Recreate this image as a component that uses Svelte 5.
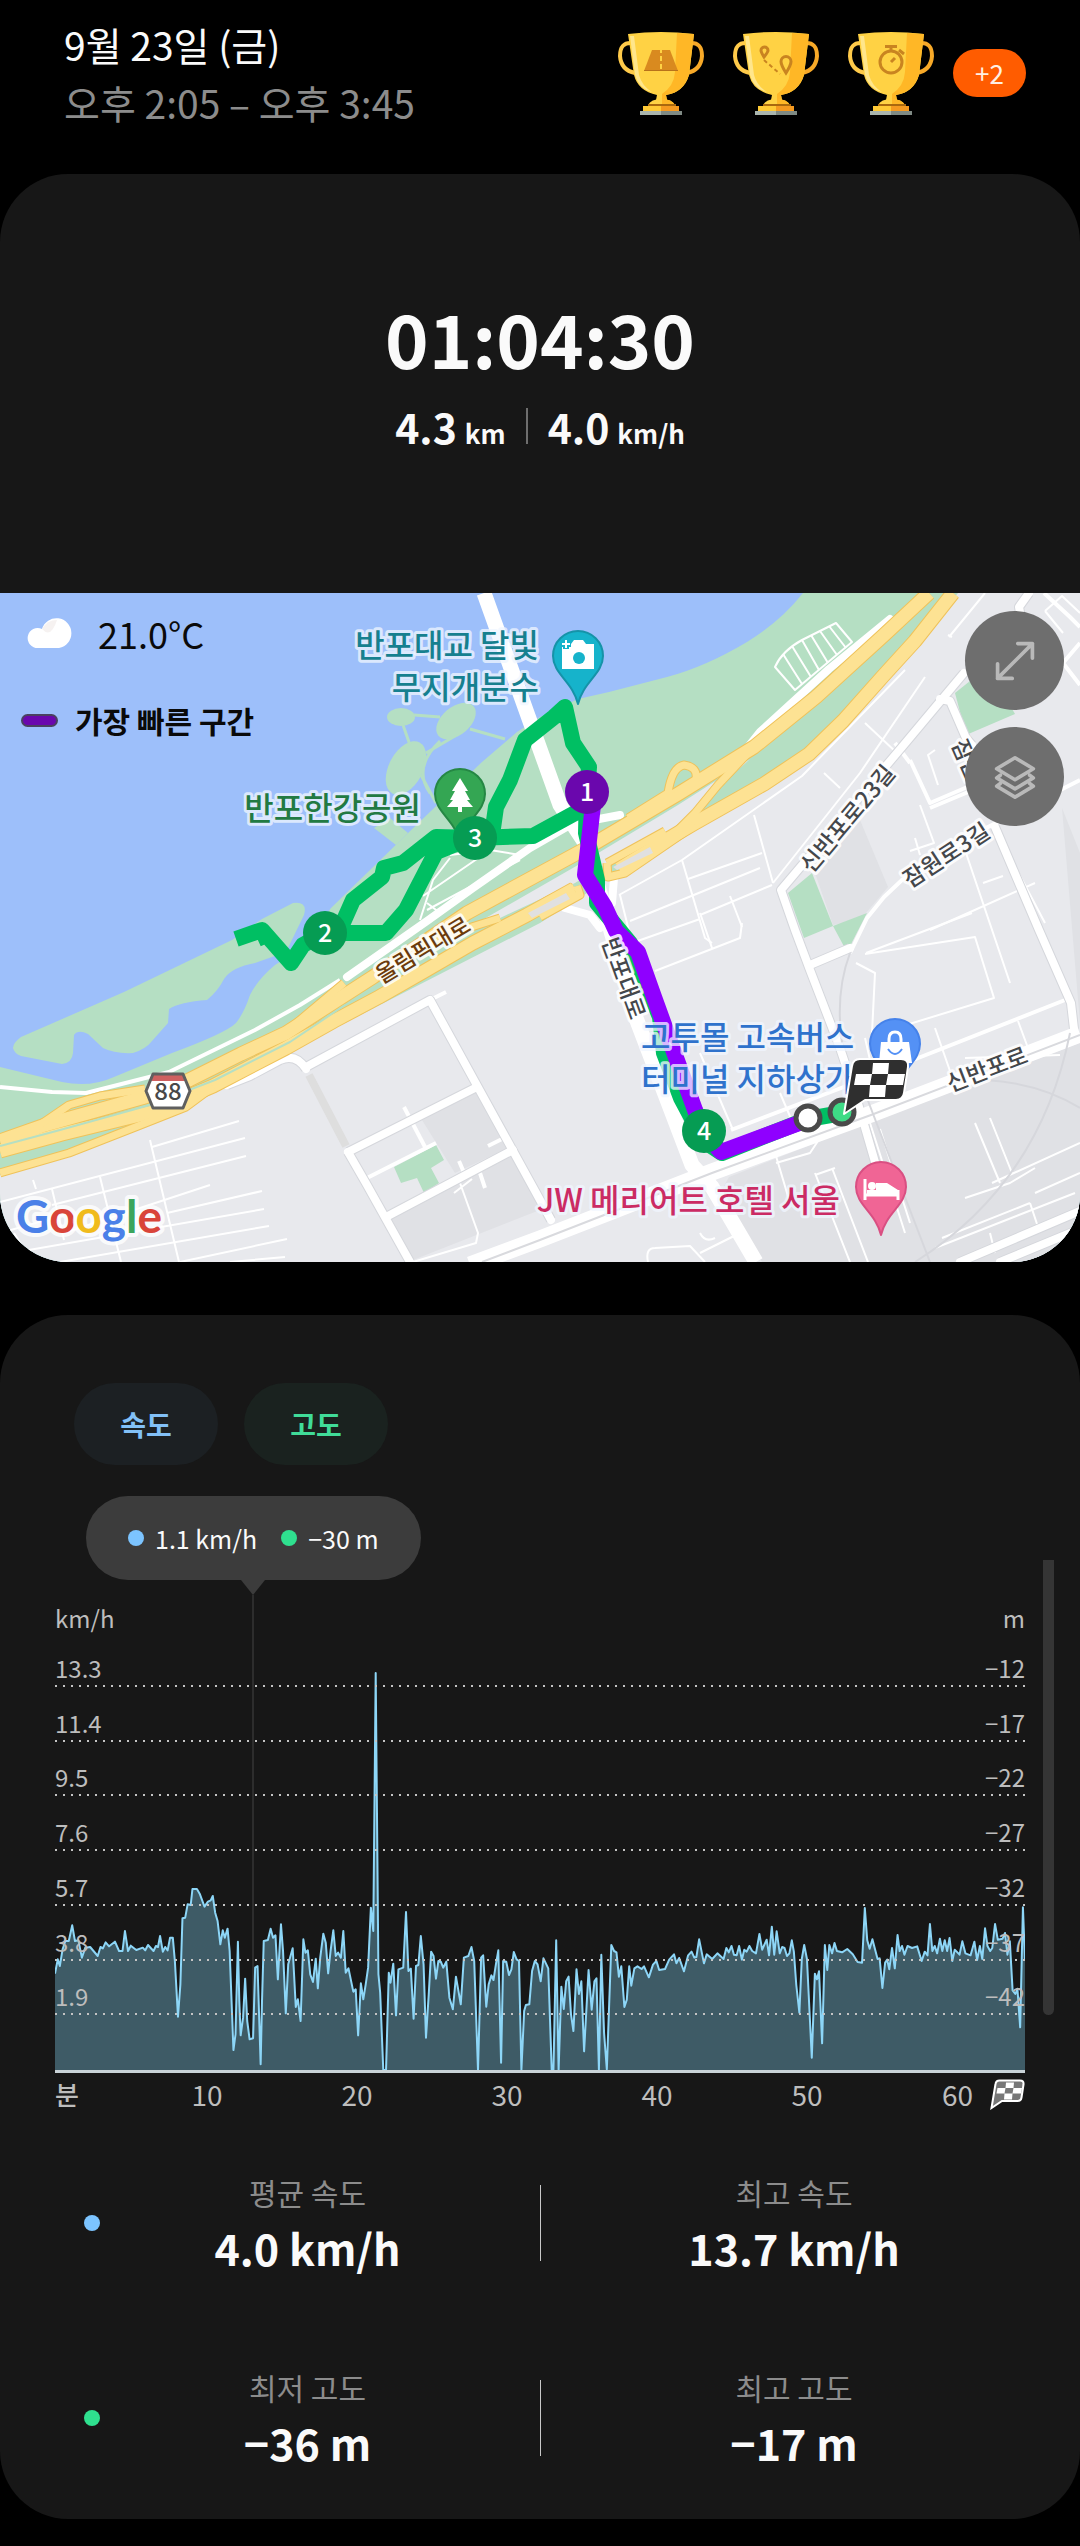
<script lang="ts">
	// Workout detail: session header with awards, duration summary with the route
	// map underneath, and the speed / elevation chart with its averages.
	type Award = 'distance' | 'route' | 'time';

	const awards: Award[] = ['distance', 'route', 'time'];

	const rows = [
		{ speed: '13.3', height: '−12' },
		{ speed: '11.4', height: '−17' },
		{ speed: '9.5', height: '−22' },
		{ speed: '7.6', height: '−27' },
		{ speed: '5.7', height: '−32' },
		{ speed: '3.8', height: '−37' },
		{ speed: '1.9', height: '−42' }
	];

	const stats = [
		{
			kind: 'speed',
			items: [
				{ label: '평균 속도', value: '4.0 km/h' },
				{ label: '최고 속도', value: '13.7 km/h' }
			]
		},
		{
			kind: 'height',
			items: [
				{ label: '최저 고도', value: '−36 m' },
				{ label: '최고 고도', value: '−17 m' }
			]
		}
	];

	const ticks = [10, 20, 30, 40, 50];

	const kilometres = [
		{ n: 2, x: 325, y: 340 },
		{ n: 3, x: 475, y: 245 },
		{ n: 4, x: 704, y: 538 }
	];

	// Speed samples as "x,height" pairs: 43.5 units a minute, 86 units a km/h.
	const CHART_W = 2816;
	const CHART_H = 1200;
	const samples = `
		0,289 8,332 14,312 22,362 30,387 40,387 50,434 58,387 68,389 78,337 88,367 102,369
		124,342 132,369 139,365 147,383 157,371 174,385 186,357 196,357 203,417 212,357
		220,373 236,360 255,367 262,359 270,375 286,357 293,372 299,369 305,402 313,355
		320,369 327,359 334,397 342,397 348,327 357,160 364,257 370,455 378,457 385,497
		394,495 399,543 412,543 420,529 434,490 444,505 452,509 458,522 465,472 472,447
		480,377 487,419 493,397 501,424 507,357 518,60 524,107 531,385 535,207 539,104
		546,157 552,274 558,147 565,92 575,95 581,307 588,312 597,17 601,207 606,387
		618,390 626,424 633,397 640,404 647,272 656,437 662,357 670,170 677,317 690,365
		699,189 705,212 713,147 721,392 727,352 734,359 741,287 749,264 757,334 763,245
		770,337 779,409 786,382 793,290 800,357 808,419 815,342 822,352 830,337 837,417
		844,292 852,305 866,235 873,242 880,104 888,260 895,212 902,257 909,307 917,487
		924,417 931,1191 939,287 944,232 953,0 961,0 969,292 974,262 982,319 990,164
		997,302 1011,307 1019,474 1026,297 1033,304 1041,154 1048,312 1055,315 1062,402
		1070,317 1077,97 1085,227 1092,355 1099,342 1106,274 1113,327 1120,325 1127,307
		1136,325 1145,217 1155,182 1164,280 1178,197 1187,337 1200,342 1209,369 1217,327
		1228,0 1237,337 1243,344 1252,190 1259,257 1267,284 1273,270 1280,317 1287,359
		1295,22 1301,327 1310,325 1318,285 1325,302 1332,354 1340,332 1347,327 1354,0
		1362,177 1367,195 1377,197 1385,297 1393,327 1401,317 1410,266 1418,335 1432,305
		1442,0 1447,0 1455,389 1462,0 1470,250 1477,183 1484,266 1491,280 1498,167
		1505,117 1514,302 1521,228 1528,266 1536,56 1549,300 1558,181 1566,266 1572,275
		1579,0 1586,346 1594,111 1602,2 1615,375 1623,357 1630,353 1637,280 1644,311
		1653,189 1660,211 1667,311 1673,253 1682,305 1691,311 1703,303 1710,311 1724,278
		1736,316 1746,327 1754,300 1771,303 1783,331 1797,347 1804,320 1812,336 1826,296
		1838,344 1848,355 1856,337 1862,339 1870,392 1884,320 1892,347 1908,333 1923,350
		1941,333 1949,366 1956,353 1964,372 1971,346 1979,344 1986,372 1994,331 2001,361
		2008,355 2016,372 2024,357 2035,350 2045,408 2053,361 2066,391 2073,344 2081,430
		2088,346 2095,416 2104,350 2111,369 2118,366 2125,342 2132,350 2139,389 2145,355
		2152,255 2161,172 2168,333 2175,375 2183,333 2197,37 2206,289 2212,272 2218,296
		2227,80 2235,375 2242,300 2248,375 2256,350 2263,381 2270,357 2285,353 2300,363
		2316,347 2330,324 2343,322 2351,486 2358,389 2365,364 2373,392 2388,333 2394,335
		2402,246 2410,322 2416,331 2422,302 2430,366 2438,305 2446,405 2452,357 2459,372
		2466,346 2475,372 2488,366 2503,371 2516,327 2525,355 2533,344 2540,438 2547,357
		2554,372 2561,350 2569,394 2576,357 2583,389 2590,357 2597,396 2605,327 2612,361
		2626,346 2634,386 2643,350 2658,344 2669,385 2677,330 2685,372 2692,333 2700,425
		2707,372 2715,357 2721,366 2729,438 2737,391 2751,394 2758,411 2765,346 2772,386
		2780,239 2788,228 2794,244 2802,128 2810,488 2816,327`
		.trim()
		.split(/\s+/)
		.map((pair) => pair.split(',').map(Number));

	const line = samples.map(([x, h]) => `${x},${CHART_H - h}`).join(' ');
	const area = `0,${CHART_H} ${line} ${CHART_W},${CHART_H}`;

	// Highway centre lines, drawn twice: casing first, then the fill.
	const highways = [
		'M929 0 L884 42 L816 104 L754 154 L678 201 L585 256 L467 320 L373 384 L286 440 L241 461 L189 487 L145 504 L45 532 L0 548',
		'M953 0 L915 48 L884 82 L843 128 L809 161 L764 191 L695 230 L661 250 L619 276',
		'M574 296 L527 322 L473 350 L423 379 L379 404 L334 428 L286 455 L213 493 L152 519 L62 541 L0 558'
	];
	const ramps = [
		'M344 390 L300 427 L286 439',
		'M145 496 L100 503 L69 512 L31 538',
		'M213 494 L186 514 L138 533 L69 560 L0 580',
		'M628 225 L668 200 Q672 174 684 172 Q698 174 696 186 L690 194 L640 222',
		'M750 158 L718 192 L695 220 L675 240',
		'M540 324 L580 302 L577 293',
		'M545 309 L574 294',
		'M628 230 L678 201',
		'M607 270 L608 284 L625 280 L695 232',
		'M607 270 L665 238',
		'M413 356 L443 343 L500 325'
	];

	const mainRoads = [
		'M964 80 L902 154 L781 297 L795 337 L810 377 L840 455 L855 500 L884 600',
		'M1029 0 L1019 14 L1022 30',
		'M940 106 L950 108 L966 145 L972 152',
		'M995 234 L1039 337 L1071 410 L1074 436',
		'M306 474 L430 407 L551 627',
		'M348 559 L477 494',
		'M386 624 L513 557',
		'M348 559 L367 592 L410 669',
		'M227 492 L250 483 L280 467 Q296 460 306 476',
		'M810 372 L850 355',
		'M1056 669 L1080 660 M960 669 L1080 618 M1000 669 L1080 636'
	];

	const lanes = [
		'M430 407 L446 399',
		'M367 585 L436 550',
		'M404 514 L425 554',
		'M488 553 L504 545',
		'M459 568 L465 582 M480 580 L485 595',
		'M850 360 L867 325 L884 304 L902 287 L988 234 L1080 187',
		'M1080 50 L1063 70 L1080 92 M1044 0 L1070 24 L1080 34',
		'M910 167 L930 210 L1000 180 M930 215 L985 192',
		'M731 537 L870 484 L1065 407',
		'M910 170 L895 150'
	];

	const alleys = [
		'M152 554 L239 528 M0 609 L245 545 M52 612 L246 563 M64 640 L210 592 M0 640 L64 622',
		'M167 620 L262 598 M0 662 L264 616 M60 669 L269 633 M180 669 L287 646 M230 669 L285 664',
		'M150 547 L179 669 M100 584 L121 669 M52 596 L64 647 M33 587 L36 596 M14 640 L32 669',
		'M619 302 L682 267 L802 183 L905 77 M754 222 L773 290 M688 286 L762 260 M630 328 L760 275',
		'M682 267 L705 345 L712 350 M620 302 L632 350 L700 326 M730 303 L742 334 M700 322 L772 292',
		'M773 290 L860 180 L925 84 M865 130 L897 160 M824 180 L840 195',
		'M949 44 L985 0 M948 42 L952 44 M1045 18 L1062 3 L1080 20 M1045 18 L1063 40',
		'M935 157 L928 162 L938 192 M920 212 L934 250 L910 258 M915 245 L920 262',
		'M865 361 L975 344 L994 405 L880 440 M856 370 L875 380 L872 440 M866 360 L972 320',
		'M966 260 L1010 390 M930 337 L1035 290 M983 290 L1003 283 M1000 245 L1045 330',
		'M655 378 L740 345 L742 330 M700 320 L712 355 M700 460 L733 537 M780 500 L795 535',
		'M865 445 L873 480 M935 435 L950 478 M1018 428 L1028 455 M965 465 L1060 462',
		'M975 530 L1000 590 M990 525 L1012 580 M965 605 L1010 590 L1035 575 M992 590 L1080 550',
		'M880 536 L910 630 M870 530 L905 640 M815 580 L850 669 M832 575 L868 669 M815 582 L835 575',
		'M648 669 Q645 655 655 655 L690 653 L705 669 M700 660 L740 640 M700 640 Q705 650 715 645',
		'M776 563 L790 610 M820 545 L810 560 L776 570 M935 655 L1075 600 M942 645 L1030 610',
		'M990 640 L995 660 M1030 610 L1040 640 M1035 600 L1080 580',
		'M460 590 L478 640 L476 650 L413 669 M454 600 L472 586'
	];
</script>

{#snippet flag()}
	<path
		class="flag-body"
		d="M17 3H58Q66 3 65 11L61 37Q60 44 53 44H22L1 58L5 34L9 10Q10 3 17 3Z"
	/>
	<path class="flag-check" d="M30 7H46L45 18H29ZM13 18H29L27 29H11ZM45 18H62L60 29H43ZM27 29H43L42 41H26Z" />
{/snippet}

{#snippet pin(x: number, y: number, kind: string)}
	<g class="pin {kind}" transform="translate({x} {y})">
		<path d="M0 -25A25 25 0 0 1 25 0C25 18 5 26 0 48C-5 26 -25 18 -25 0A25 25 0 0 1 0 -25Z" />
	</g>
{/snippet}

<main>
	<header>
		<div class="when">
			<h1>9월 23일 (금)</h1>
			<p>오후 2:05 – 오후 3:45</p>
		</div>
		<div class="awards">
			{#each awards as award (award)}
				<svg class="trophy" viewBox="0 0 86 83" role="img" aria-label={award}>
					<path class="handle" d="M14 11Q2 10 2 24Q3 38 17 41" />
					<path class="handle dark" d="M72 11Q84 10 84 24Q83 38 69 41" />
					<path fill="#ffd244" d="M10 2Q43 -2 76 2L71 43Q66 60 48 63L49 68H38L39 63Q20 59 16 43Z" />
					<path fill="#ffb726" d="M59 1L76 2L71 43Q66 60 48 63L49 68H44L44 62Q56 54 57 40Z" />
					<path fill="#ffe68c" d="M12 4L16 4L21 43Q24 54 34 60Q21 57 17 43Z" />
					<path fill="#ffd244" d="M30 73Q33 67 43 67Q54 67 57 73Z" />
					<path fill="#ffb726" d="M44 67Q54 67 57 73H44Z" />
					<path fill="#a9690f" d="M30 72H58V74H30Z" />
					<path fill="#ffca35" d="M25 74H43V79H25Z" />
					<path fill="#f59a20" d="M43 74H61V79H43Z" />
					<path fill="#aab5ae" d="M22 79H43V83H22Z" />
					<path fill="#7f8a84" d="M43 79H64V83H43Z" />
					{#if award === 'distance'}
						<path fill="#d98a1f" d="M34 18H52L60 39H26Z" />
						<path fill="#ffd244" d="M42 18H44V21H42ZM42 24H44V29H42ZM42 32H44V37H42Z" />
						<path fill="#b8721a" d="M26 38H60V39H26Z" />
					{:else if award === 'route'}
						<path
							class="engrave"
							d="M31 25Q28 20 28 18.500A3.500 3.500 0 0 1 35 18.500Q35 20 31 25ZM53 41Q48 33 48 29.500A5 5 0 0 1 58 29.500Q58 33 53 41Z"
						/>
						<path class="engrave dash" d="M31 28L47 42" />
					{:else}
						<circle class="engrave" cx="43" cy="30" r="11" />
						<path class="engrave" d="M37 14.500H49M43 15V18M43 30L47 26M51 18L56 22" />
					{/if}
				</svg>
			{/each}
			<button type="button" class="more">+2</button>
		</div>
	</header>

	<section class="card summary">
		<div class="totals">
			<p class="duration">01:04:30</p>
			<div class="pair">
				<p>4.3 <small>km</small></p>
				<span class="rule"></span>
				<p>4.0 <small>km/h</small></p>
			</div>
		</div>

		<div class="map">
			<svg class="canvas" viewBox="0 0 1080 669" role="img" aria-label="운동 경로 지도">
				<rect width="1080" height="669" fill="#9dbffa" />

				<!-- river bank, floating islets and the long island -->
				<g fill="#b5dfc3">
					<path
						d="M803 0Q781 28 747 49Q705 74 667 84L609 99L578 106L540 124L517 139L482 169L406 242L331 315L303 354L275 372Q258 386 250 402Q244 420 236 430Q226 440 172 460L114 484Q90 495 62 489L0 474V669H1080V0Z"
					/>
					<path
						d="M232 347L124 399L21 444Q13 450 13 455Q14 460 21 463L62 471Q72 470 73 460L74 442Q78 436 88 441L103 455Q115 461 133 460Q146 456 152 448L168 430L169 416Q180 409 207 407Q218 398 224 386Q232 374 255 370L286 359L304 322Q308 308 293 310L262 326Z"
					/>
					<ellipse cx="401" cy="124" rx="14" ry="9" />
					<ellipse cx="456" cy="128" rx="23" ry="14" transform="rotate(-40 456 128)" />
					<ellipse cx="406" cy="175" rx="29" ry="17" transform="rotate(-62 406 175)" />
					<path d="M374 235L390 225L408 240L396 252Z" />
				</g>
				<path
					class="causeway"
					d="M414 122L440 124M403 132L410 152M470 136L505 146M426 160L455 143M421 182L436 210M440 148Q412 175 430 200"
				/>

				<!-- city blocks -->
				<path
					fill="#e8e9ed"
					d="M0 582L83 557L186 514L224 494L331 437L540 330L609 286L698 236L764 198L809 169L843 134L884 90L919 48L958 0H1080V669H0Z"
				/>
				<path fill="#e8e9ed" d="M470 334L585 268L678 212L750 166L668 240L610 268L575 290L500 325Z" />
				<g fill="#e0e1e5">
					<path d="M422 527L477 499L510 554L455 580Z" />
					<path d="M389 627L517 560L545 615L413 667Z" />
					<path d="M860 227L888 294L860 327L833 332L815 280Z" />
					<path d="M1062 215L1080 260V430Z" />
					<path d="M729 584L867 530L1080 450V669H762L720 600Z" />
				</g>
				<g fill="#b5dfc3">
					<path d="M970 88L955 100L966 142L1015 121L1000 95Z" />
					<path d="M812 280L788 300L804 345L833 333Z" />
					<path d="M833 333L867 320L847 359Z" />
					<path d="M394 574L436 552L444 567L431 575L439 590L424 600L417 585L401 590Z" />
				</g>

				<!-- streets -->
				{#each alleys as d (d)}<path class="road alley" {d} />{/each}
				{#each lanes as d (d)}<path class="road lane" {d} />{/each}
				{#each mainRoads as d (d)}<path class="road casing" {d} />{/each}
				{#each mainRoads as d (d)}<path class="road main" {d} />{/each}
				<path class="road closed" d="M309 482L346 553" />
				<path class="road avenue" d="M484 0L560 212L585 250L600 300L636 425L692 572L712 594L756 669" />
				<path class="road avenue wide" d="M470 672L540 646L712 579L871 521L1080 441" />
				<path class="median" d="M482 669L540 647L712 580L871 522L1080 442" />
				<path class="road main" d="M577 228L530 255L473 295L427 328L347 384M578 230L620 222M890 26L829 76L760 139L748 154" />
				<path class="road lane" d="M340 387L300 412L255 437L169 479L86 500L52 499L0 494" />
				<path class="road alley" d="M450 265L433 287L420 327M450 262L490 257L520 262M490 257L423 303M520 267L427 317M427 310L440 320" />
				<path class="road main" d="M565 315L590 322L600 335M614 285L612 310" />
				<path class="road alley" d="M836 30L852 49L795 97L775 74Q782 58 802 47Z" />
				<path class="road alley" d="M829 33L846 55M820 38L837 62M811 42L828 70M802 47L819 77M792 53L811 84M783 61L802 91" />

				<!-- ring rail lines -->
				<path class="rail" d="M850 360Q835 400 842 450M865 500L930 669M915 669Q1040 590 1070 440M1080 515Q1040 490 985 487" />

				<!-- expressway -->
				{#each highways as d (d)}<path class="expressway casing" {d} />{/each}
				{#each ramps as d (d)}<path class="ramp casing" {d} />{/each}
				{#each highways as d (d)}<path class="expressway" {d} />{/each}
				{#each ramps as d (d)}<path class="ramp" {d} />{/each}
				<path fill="#e0e0e0" d="M613 274L650 254L653 260L617 277ZM528 320L566 300L570 306L532 325Z" />
				<path class="expressway-line" d="M0 553L60 537L150 512L215 487L290 449L345 412" />

				<g class="street">
					<text class="brown" transform="translate(427 364) rotate(-31)">올림픽대로</text>
					<text transform="translate(854 231) rotate(-50)">신반포로23길</text>
					<text transform="translate(951 269) rotate(-33)">잠원로3길</text>
					<text transform="translate(964 180) rotate(66)">잠원로</text>
					<text transform="translate(990 484) rotate(-21)">신반포로</text>
				</g>

				{@render pin(578, 63, 'teal')}
				<path fill="#fff" d="M562 51H571L574 47H583L586 51H594V76H562Z" />
				<circle cx="579" cy="65" r="6" fill="#16b3cb" />
				<path stroke="#16b3cb" stroke-width="6" d="M561 51H571M566 46V56" />
				<path stroke="#fff" stroke-width="2" d="M562 51H570M566 47V55" />

				{@render pin(460, 201, 'green')}
				<path fill="#fff" d="M460 185L468 198H465L470 207H467L473 214H462V219H458V214H447L453 207H450L455 198H452Z" />

				{@render pin(895, 451, 'blue')}
				<path fill="#fff" d="M881 449H909L912 470H879Z" />
				<path fill="none" stroke="#fff" stroke-width="3" d="M889 450V446Q889 439 895 439Q901 439 901 446V450" />
				<path fill="none" stroke="#5491f5" stroke-width="2" d="M888 456Q895 466 902 456" />

				{@render pin(881, 594, 'pink')}
				<path stroke="#fff" stroke-width="3" d="M865 586V607M865 602H898M898 597V607" />
				<path fill="#fff" d="M876 590H887L898 597V601H867V597H876Z" />
				<circle cx="872" cy="593" r="4" fill="#fff" />

				<!-- recorded route: full track, then the fastest section on top -->
				<path
					class="track"
					d="M842 520L808 526L722 560L704 548L681 505L664 460L660 424L630 350L597 310L597 287L586 240L587 199L589 174L573 150L565 114L554 124L525 147L510 187L496 214L492 242L475 245M587 212L577 219L533 243L475 245L436 244L403 270L384 275L382 284L353 307L341 334L325 340L303 352L291 370L262 337L236 346M262 337L268 350M325 340L386 340L406 317L436 259L458 250"
				/>
				<path class="fast" d="M593 212L585 282L605 314L616 338L638 359L654 404L695 517L704 540L721 559L802 529" />

				<g class="street">
					<text transform="translate(616 388) rotate(70)">반포대로</text>
				</g>
				<g class="place">
					<text class="teal" x="539" y="64" text-anchor="end">반포대교 달빛</text>
					<text class="teal" x="539" y="106" text-anchor="end">무지개분수</text>
					<text class="green" x="421" y="227" text-anchor="end">반포한강공원</text>
					<text class="blue" x="641" y="456">고투몰 고속버스</text>
					<text class="blue" x="641" y="498">터미널 지하상가</text>
					<text class="pink" x="840" y="619" text-anchor="end">JW 메리어트 호텔 서울</text>
				</g>

				{#each kilometres as km (km.n)}
					<g class="km" transform="translate({km.x} {km.y})">
						<circle r="22" />
						<text y="9">{km.n}</text>
					</g>
				{/each}
				<g class="km first" transform="translate(587 199)">
					<circle r="22" />
					<text y="9">1</text>
				</g>

				<circle class="stop" cx="808" cy="525" r="12" />
				<circle class="stop start" cx="842" cy="519" r="12" />
				<g transform="translate(843 463)">{@render flag()}</g>

				<g class="shield">
					<path fill="#fff" d="M153 481H183L190 498L183 515H153L146 498Z" />
					<path fill="#cf6060" d="M153 481H183L185 488H151Z" />
					<path fill="none" stroke="#5f5f5f" stroke-width="3" d="M153 481H183L190 498L183 515H153L146 498Z" />
					<text x="168" y="507">88</text>
				</g>

				<text class="brand" x="16" y="640"
					><tspan fill="#4a80e8">G</tspan><tspan fill="#d9453a">o</tspan><tspan fill="#f0bb1c">o</tspan
					><tspan fill="#4a80e8">g</tspan><tspan fill="#3ba55c">l</tspan><tspan fill="#d9453a">e</tspan></text
				>
			</svg>

			<div class="overlay">
				<div class="weather">
					<svg viewBox="0 0 46 32" aria-hidden="true">
						<path fill="#fff" d="M11 31A10 10 0 1 1 15 12A15 15 0 1 1 32 31Z" />
						<path fill="#f6f2f1" d="M15 12Q20 3 30 3Q24 22 15 12Z" />
					</svg>
					<span>21.0°C</span>
				</div>
				<div class="legend"><i></i>가장 빠른 구간</div>
			</div>
			<div class="tools">
				<button type="button" aria-label="지도 확대">
					<svg viewBox="0 0 48 48"><path d="M27 5H43V21M43 5L5 43M5 27V43H21" /></svg>
				</button>
				<button type="button" aria-label="지도 레이어">
					<svg viewBox="0 0 48 48">
						<path d="M24 3L44 15L24 27L4 15ZM8 22L4 25L24 37L44 25L40 22M8 31L4 34L24 46L44 34L40 31" />
					</svg>
				</button>
			</div>
		</div>
	</section>

	<section class="card details">
		<div class="chips">
			<button type="button" class="chip speed">속도</button>
			<button type="button" class="chip height">고도</button>
		</div>

		<div class="tooltip">
			<span class="dot speed"></span><span>1.1 km/h</span>
			<span class="dot height second"></span><span>−30 m</span>
		</div>

		<div class="chart">
			<div class="units"><span>km/h</span><span>m</span></div>
			<div class="plot">
				<svg viewBox="0 0 {CHART_W} {CHART_H}" preserveAspectRatio="none" aria-hidden="true">
					<polygon points={area} />
					<polyline points={line} />
				</svg>
				{#each rows as row (row.speed)}
					<div class="row"><span>{row.speed}</span><span>{row.height}</span></div>
				{/each}
				<div class="row last"></div>
			</div>
			<div class="axis">
				<span class="unit">분</span>
				{#each ticks as tick (tick)}
					<span>{tick}</span>
				{/each}
				<span class="end">
					60
					<svg viewBox="-2 0 70 62" aria-hidden="true">{@render flag()}</svg>
				</span>
			</div>
		</div>

		<div class="stats">
			{#each stats as group (group.kind)}
				<div class="group">
					<div class="cell left">
						<span class="dot {group.kind}"></span>
						<dl>
							<dt>{group.items[0].label}</dt>
							<dd>{group.items[0].value}</dd>
						</dl>
					</div>
					<div class="cell right">
						<span class="divider"></span>
						<dl>
							<dt>{group.items[1].label}</dt>
							<dd>{group.items[1].value}</dd>
						</dl>
					</div>
				</div>
			{/each}
		</div>

		<div class="scrollbar"></div>
	</section>
</main>

<style>
	:global(body) {
		margin: 0;
		background: #000;
	}
	main {
		padding-bottom: 25px;
		color: #fafafa;
		font-family: 'Noto Sans CJK KR', sans-serif;
	}
	h1,
	p,
	dl,
	dd {
		margin: 0;
	}
	button {
		padding: 0;
		border: 0;
		font: inherit;
		cursor: pointer;
	}

	header {
		display: flex;
		justify-content: space-between;
		align-items: center;
		padding: 15px 54px 43px 64px;
	}
	.when {
		font-size: 39px;
		line-height: 58px;
	}
	.when h1 {
		font-size: inherit;
		font-weight: 400;
	}
	.when p {
		color: #8c8c8c;
	}
	.awards {
		display: flex;
		align-items: center;
		gap: 29px;
	}
	.trophy {
		width: 86px;
		height: 83px;
	}
	.handle {
		fill: none;
		stroke: #ffca4a;
		stroke-width: 4;
	}
	.handle.dark {
		stroke: #f7a928;
	}
	.engrave {
		fill: none;
		stroke: #c98420;
		stroke-width: 3;
	}
	.engrave.dash {
		stroke-width: 2;
		stroke-dasharray: 4 3;
	}
	.more {
		width: 73px;
		height: 48px;
		margin-left: -10px;
		border-radius: 24px;
		background: #ff5c00;
		color: #fff0e4;
		font-size: 26px;
		line-height: 48px;
	}

	.card {
		border-radius: 68px;
		background: #171717;
	}
	.summary {
		overflow: hidden;
		margin-bottom: 53px;
	}
	.totals {
		display: flex;
		flex-direction: column;
		align-items: center;
		gap: 15px;
		padding: 115px 0 141px;
	}
	.duration {
		font-size: 74px;
		font-weight: 700;
		line-height: 96px;
	}
	.pair {
		display: flex;
		align-items: center;
		gap: 20px;
		height: 52px;
		font-size: 41px;
		font-weight: 700;
		line-height: 52px;
	}
	.pair p {
		display: flex;
		align-items: baseline;
		gap: 8px;
	}
	.pair small {
		font-size: 26px;
		line-height: 28px;
	}
	.rule {
		width: 2px;
		height: 36px;
		background: #6e6e6e;
	}

	.map {
		position: relative;
	}
	.canvas {
		display: block;
		width: 100%;
		height: auto;
	}
	.canvas path {
		stroke-linejoin: round;
	}
	.causeway {
		fill: none;
		stroke: #b5dfc3;
		stroke-width: 3;
	}
	.road {
		fill: none;
		stroke: #fff;
	}
	.road.alley {
		stroke-width: 2;
	}
	.road.lane {
		stroke-width: 4;
	}
	.road.casing {
		stroke: #d5d7dc;
		stroke-width: 10;
	}
	.road.main {
		stroke-width: 8;
		stroke-linecap: round;
	}
	.road.avenue {
		stroke-width: 15;
	}
	.road.wide {
		stroke-width: 17;
	}
	.road.closed {
		stroke: #dedede;
		stroke-width: 8;
	}
	.median {
		fill: none;
		stroke: #d9dade;
		stroke-width: 2;
	}
	.rail {
		fill: none;
		stroke: #d6d7dc;
		stroke-width: 2;
	}
	.expressway {
		fill: none;
		stroke: #fde293;
		stroke-width: 13;
	}
	.expressway.casing {
		stroke: #efc25a;
		stroke-width: 15;
	}
	.ramp {
		fill: none;
		stroke: #fde293;
		stroke-width: 7;
	}
	.ramp.casing {
		stroke: #efc25a;
		stroke-width: 9;
	}
	.expressway-line {
		fill: none;
		stroke: #b5dfc3;
		stroke-width: 2;
	}
	.track,
	.fast {
		fill: none;
		stroke: #00bf63;
		stroke-width: 16;
	}
	.fast {
		stroke: #8f00ff;
	}
	.canvas text {
		font-weight: 500;
		paint-order: stroke;
		stroke-linejoin: round;
	}
	.place text {
		font-size: 32px;
		stroke: rgb(240 246 255 / 75%);
		stroke-width: 6;
	}
	.street text {
		fill: #44474b;
		font-size: 23px;
		stroke: rgb(255 255 255 / 85%);
		stroke-width: 6;
		text-anchor: middle;
	}
	.street .brown {
		fill: #6b3b0c;
	}
	.place .teal {
		fill: #16808f;
	}
	.place .green {
		fill: #227a43;
	}
	.place .blue {
		fill: #2f72cc;
	}
	.place .pink {
		fill: #cb2b64;
	}
	.pin path {
		stroke-width: 2;
	}
	.pin.teal {
		fill: #16b3cb;
		stroke: #1593a8;
	}
	.pin.green {
		fill: #34a653;
		stroke: #258744;
	}
	.pin.blue {
		fill: #5491f5;
		stroke: #4582ea;
	}
	.pin.pink {
		fill: #f06595;
		stroke: #d94f82;
	}
	.km {
		fill: #069c53;
	}
	.km.first {
		fill: #6a07ad;
	}
	.km text {
		fill: #fff;
		font-size: 25px;
		text-anchor: middle;
	}
	.stop {
		fill: #fff;
		stroke: #4a4a4a;
		stroke-width: 5;
	}
	.stop.start {
		fill: #3edb86;
	}
	.flag-body {
		fill: #2f2f2f;
		stroke: #fff;
		stroke-width: 2;
	}
	.flag-check {
		fill: #fff;
	}
	.shield text {
		fill: #484848;
		font-size: 24px;
		text-anchor: middle;
	}
	.canvas .brand {
		font-family: Lato, sans-serif;
		font-size: 46px;
		font-weight: 700;
		stroke: rgb(255 255 255 / 80%);
		stroke-width: 8;
	}

	.overlay {
		position: absolute;
		top: 16px;
		left: 21px;
		color: #0a0a0a;
	}
	.weather {
		display: flex;
		align-items: center;
		gap: 25px;
		padding-left: 6px;
		font-size: 36px;
		line-height: 48px;
	}
	.weather svg {
		width: 46px;
		height: 32px;
	}
	.legend {
		display: flex;
		align-items: center;
		gap: 17px;
		margin-top: 41px;
		font-size: 30px;
		font-weight: 700;
		line-height: 44px;
	}
	.legend i {
		box-sizing: border-box;
		width: 37px;
		height: 13px;
		border: 2px solid #4a4160;
		border-radius: 7px;
		background: #6a07ad;
	}
	.tools {
		position: absolute;
		top: 18px;
		right: 16px;
		display: flex;
		flex-direction: column;
		gap: 17px;
	}
	.tools button {
		display: grid;
		place-items: center;
		width: 99px;
		height: 99px;
		border-radius: 50%;
		background: #6e6e6e;
	}
	.tools svg {
		width: 44px;
		height: 44px;
		fill: none;
		stroke: #b9b9b9;
		stroke-width: 4;
		stroke-linecap: round;
		stroke-linejoin: round;
	}

	.details {
		position: relative;
		padding: 68px 0 51px;
	}
	.chips {
		display: flex;
		gap: 26px;
		padding-left: 74px;
	}
	.chip {
		width: 144px;
		height: 82px;
		border-radius: 41px;
		font-size: 28px;
		font-weight: 700;
	}
	.chip.speed {
		background: #1c2023;
		color: #82c0f7;
	}
	.chip.height {
		background: #1a221f;
		color: #40dc98;
	}

	.tooltip {
		position: relative;
		display: flex;
		align-items: center;
		width: max-content;
		height: 84px;
		margin: 31px 0 0 86px;
		padding: 0 42px;
		border-radius: 42px;
		background: #3c3c3c;
		font-size: 25px;
	}
	.tooltip .dot {
		margin-right: 11px;
	}
	.tooltip .second {
		margin-left: 24px;
	}
	/* Pointer and the scrub line dropping into the chart. */
	.tooltip::before {
		content: '';
		position: absolute;
		top: 84px;
		left: 50%;
		margin-left: -12px;
		border: 12px solid transparent;
		border-top: 15px solid #3c3c3c;
		border-bottom: 0;
	}
	.tooltip::after {
		content: '';
		position: absolute;
		top: 99px;
		left: 50%;
		width: 2px;
		height: 450px;
		margin-left: -1px;
		background: #2d2d2d;
	}
	.dot {
		flex: none;
		width: 16px;
		height: 16px;
		border-radius: 50%;
	}
	.dot.speed {
		background: #7cc4ff;
	}
	.dot.height {
		background: #2fe08f;
	}

	.chart {
		margin: 0 55px;
		color: #bdbdbd;
		font-size: 24px;
		line-height: 28px;
	}
	.units {
		display: flex;
		justify-content: space-between;
		align-items: flex-end;
		height: 52px;
	}
	.plot {
		position: relative;
		display: flex;
		flex-direction: column;
		height: 438px;
		border-bottom: 3px solid #c9d3d8;
	}
	.plot svg {
		position: absolute;
		bottom: 0;
		left: 0;
		width: 100%;
		height: 400px;
	}
	.plot polygon {
		fill: #3e5b66;
	}
	.plot polyline {
		fill: none;
		stroke: #8dd6f7;
		stroke-width: 2;
		stroke-linejoin: round;
		vector-effect: non-scaling-stroke;
	}
	.row {
		position: relative;
		flex: 1;
		display: flex;
		justify-content: space-between;
		align-items: flex-end;
		padding-bottom: 5px;
		background: repeating-linear-gradient(90deg, #c4c4c4 0 2px, transparent 2px 8px) bottom / 100% 2px
			no-repeat;
	}
	.row.last {
		background: none;
	}
	.axis {
		display: grid;
		grid-template-columns: 77fr repeat(5, 150fr) 143fr;
		align-items: center;
		height: 42px;
		font-size: 28px;
		text-align: center;
	}
	.axis .unit {
		font-size: 26px;
		font-weight: 500;
		text-align: left;
	}
	.end {
		display: flex;
		justify-content: flex-end;
		align-items: center;
		gap: 17px;
	}
	.end svg {
		width: 35px;
		height: 31px;
	}
	.end .flag-body {
		fill: #777;
		stroke-width: 4;
	}

	.stats {
		display: flex;
		flex-direction: column;
		gap: 94px;
		margin-top: 57px;
	}
	.group {
		display: grid;
		grid-template-columns: 1fr 1fr;
	}
	.cell {
		display: flex;
		align-items: center;
	}
	.cell.left {
		padding: 0 25px 0 84px;
	}
	.cell.right {
		padding-right: 33px;
	}
	dl {
		flex: 1;
		text-align: center;
	}
	dt {
		margin-bottom: 9px;
		color: #8c8c8c;
		font-size: 30px;
		line-height: 40px;
	}
	dd {
		font-size: 43px;
		font-weight: 700;
		line-height: 52px;
	}
	.divider {
		width: 1px;
		height: 76px;
		background: #c8c8c8;
	}

	.scrollbar {
		position: absolute;
		top: 245px;
		right: 26px;
		width: 11px;
		height: 455px;
		border-radius: 0 0 6px 6px;
		background: #353535;
	}
</style>
